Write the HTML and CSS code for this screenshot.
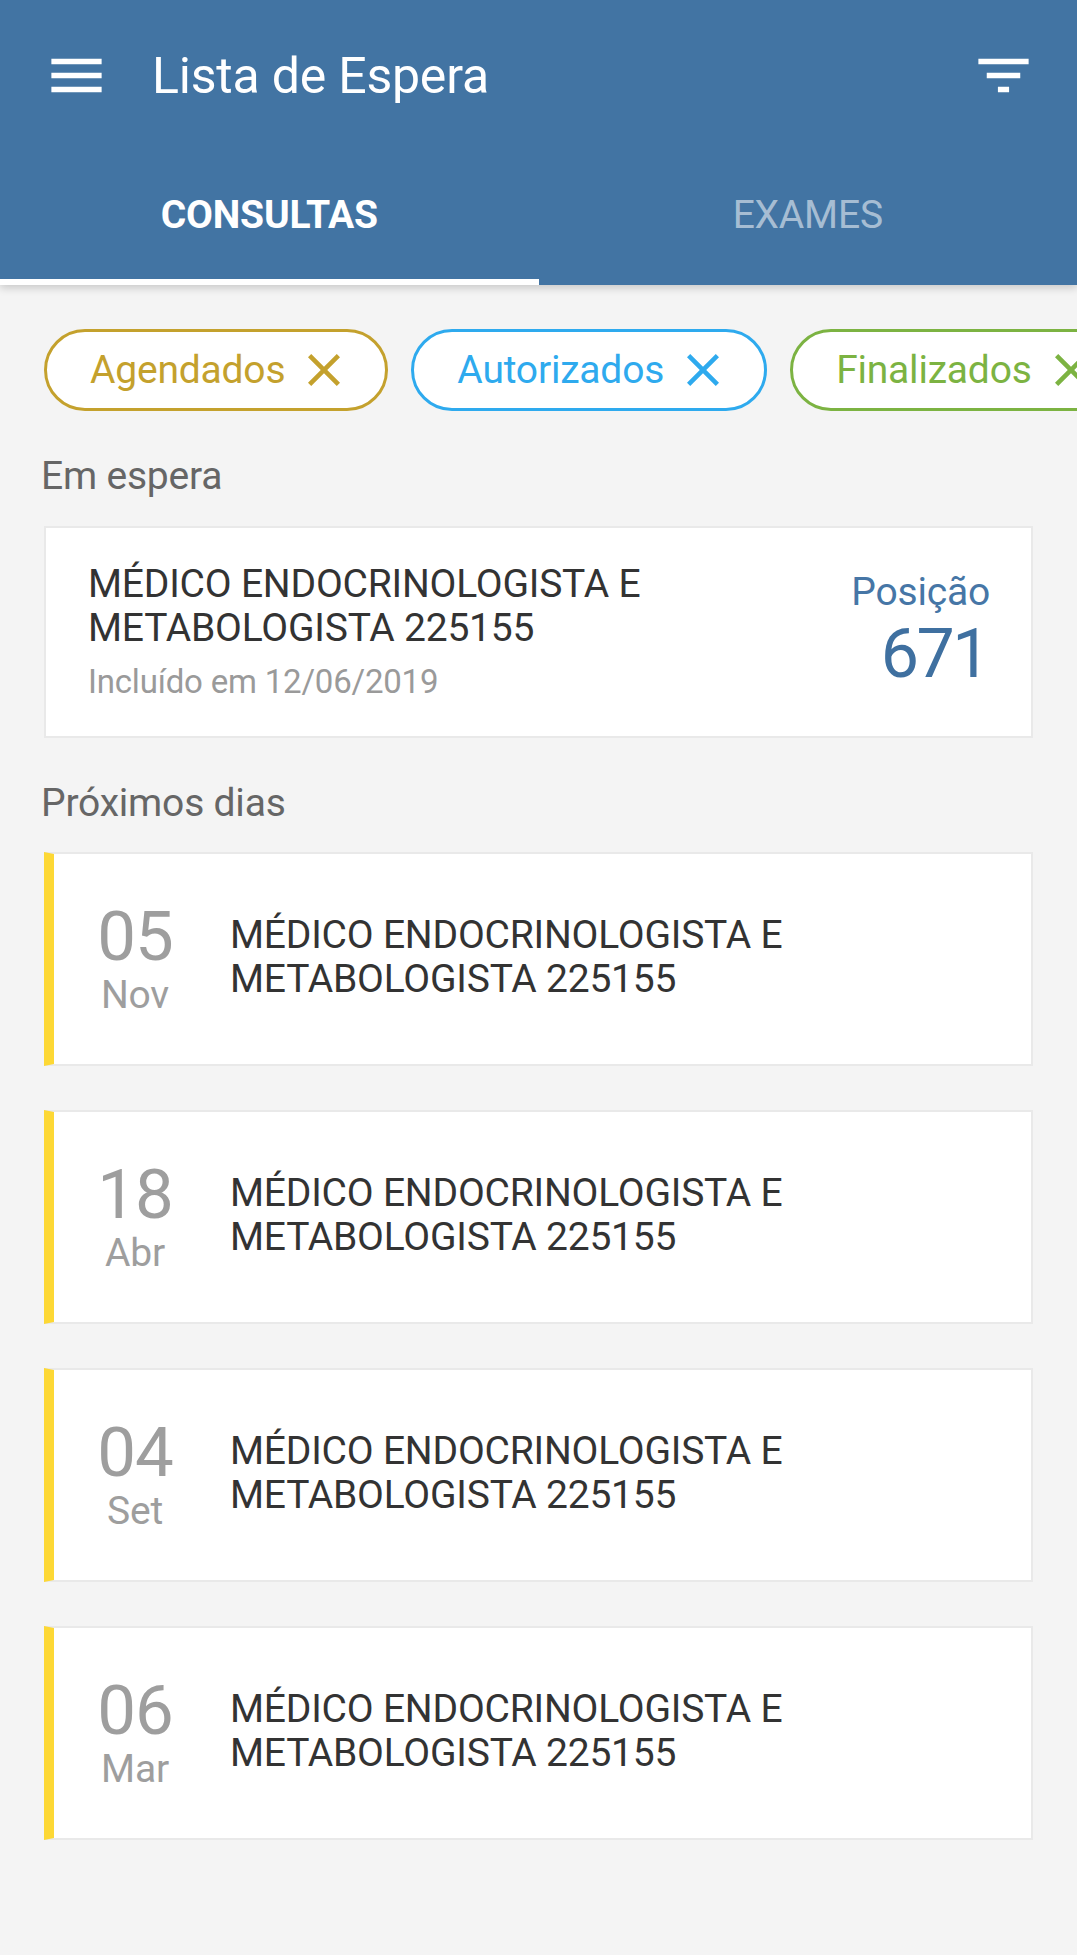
FILE: index.html
```html
<!DOCTYPE html>
<html lang="pt">
<head>
<meta charset="utf-8">
<title>Lista de Espera</title>
<link rel="stylesheet" href="styles.css">
</head>
<body>
<header class="appbar">
  <div class="toolbar">
    <svg class="icon" viewBox="0 0 24 24" aria-hidden="true"><path d="M3 18h18v-2H3v2zm0-5h18v-2H3v2zm0-7v2h18V6H3z"/></svg>
    <h1 class="title">Lista de Espera</h1>
    <svg class="icon icon-right" viewBox="0 0 24 24" aria-hidden="true"><path d="M10 18h4v-2h-4v2zM3 6v2h18V6H3zm3 7h12v-2H6v2z"/></svg>
  </div>
  <nav class="tabs">
    <div class="tab active">CONSULTAS</div>
    <div class="tab">EXAMES</div>
  </nav>
</header>

<main class="content">
  <div class="chips">
    <div class="chip chip-gold">Agendados<svg class="x" viewBox="5 5 14 14"><path d="M19 6.41L17.59 5 12 10.59 6.41 5 5 6.41 10.59 12 5 17.59 6.41 19 12 13.41 17.59 19 19 17.59 13.41 12z"/></svg></div>
    <div class="chip chip-blue">Autorizados<svg class="x" viewBox="5 5 14 14"><path d="M19 6.41L17.59 5 12 10.59 6.41 5 5 6.41 10.59 12 5 17.59 6.41 19 12 13.41 17.59 19 19 17.59 13.41 12z"/></svg></div>
    <div class="chip chip-green">Finalizados<svg class="x" viewBox="5 5 14 14"><path d="M19 6.41L17.59 5 12 10.59 6.41 5 5 6.41 10.59 12 5 17.59 6.41 19 12 13.41 17.59 19 19 17.59 13.41 12z"/></svg></div>
  </div>

  <h2 class="section">Em espera</h2>
  <div class="card wait">
    <div class="wait-info">
      <div class="name">MÉDICO ENDOCRINOLOGISTA E<br>METABOLOGISTA 225155</div>
      <div class="included">Incluído em 12/06/2019</div>
    </div>
    <div class="position">
      <div class="pos-label">Posição</div>
      <div class="pos-num">671</div>
    </div>
  </div>

  <h2 class="section section-next">Próximos dias</h2>
  <div class="card item">
    <div class="date"><div class="day">05</div><div class="month">Nov</div></div>
    <div class="name">MÉDICO ENDOCRINOLOGISTA E<br>METABOLOGISTA 225155</div>
  </div>
  <div class="card item">
    <div class="date"><div class="day">18</div><div class="month">Abr</div></div>
    <div class="name">MÉDICO ENDOCRINOLOGISTA E<br>METABOLOGISTA 225155</div>
  </div>
  <div class="card item">
    <div class="date"><div class="day">04</div><div class="month">Set</div></div>
    <div class="name">MÉDICO ENDOCRINOLOGISTA E<br>METABOLOGISTA 225155</div>
  </div>
  <div class="card item">
    <div class="date"><div class="day">06</div><div class="month">Mar</div></div>
    <div class="name">MÉDICO ENDOCRINOLOGISTA E<br>METABOLOGISTA 225155</div>
  </div>
</main>
</body>
</html>
```

FILE: styles.css
```css
* { box-sizing: border-box; }

html, body {
  margin: 0;
  padding: 0;
}

body {
  background: #f4f4f4;
  font-family: Roboto, "Noto Sans", "Liberation Sans", sans-serif;
  letter-spacing: -0.2px;
  width: 1077px;
  min-height: 1955px;
  overflow: hidden;
}

.appbar {
  background: #4274a3;
  color: #fff;
  box-shadow: 0 3px 8px rgba(0, 0, 0, 0.18);
  position: relative;
  z-index: 1;
}

.toolbar {
  height: 151px;
  display: flex;
  align-items: center;
  padding: 0 40px 0 43px;
}

.icon {
  width: 67px;
  height: 67px;
  fill: #fff;
  flex: none;
}

.icon-right { margin-left: auto; }

.title {
  margin: 0 0 0 42px;
  font-size: 50px;
  font-weight: 400;
  line-height: 60px;
}

.tabs {
  display: flex;
  height: 134px;
}

.tab {
  flex: 1;
  display: flex;
  align-items: center;
  justify-content: center;
  padding-bottom: 6px;
  font-size: 39px;
  font-weight: 400;
  color: rgba(255, 255, 255, 0.55);
}

.tab.active {
  font-weight: 700;
  color: #fff;
  box-shadow: inset 0 -6px 0 #fff;
}

.content {
  padding: 44px 44px 0 44px;
}

.chips {
  display: flex;
  gap: 23px;
  white-space: nowrap;
  margin-right: -44px;
  overflow: hidden;
}

.chip {
  flex: none;
  height: 82px;
  border: 3px solid currentColor;
  border-radius: 41px;
  background: #fff;
  display: flex;
  align-items: center;
  gap: 23px;
  padding: 0 45px 0 43px;
  font-size: 39px;
  line-height: 46px;
}

.chip .x {
  width: 32px;
  height: 32px;
  fill: currentColor;
  flex: none;
}

.chip-gold { color: #c4a12d; }
.chip-blue { color: #2eaaee; }
.chip-green { color: #7cb342; }

.section {
  margin: 42px 0 27px -3px;
  font-size: 39px;
  font-weight: 400;
  line-height: 46px;
  color: #666;
}

.section-next { margin-bottom: 26px; }

.card {
  background: #fff;
  border: 2px solid #e9e9e9;
}

.wait {
  display: flex;
  align-items: center;
  justify-content: space-between;
  padding: 34px 41px 34px 42px;
}

.name {
  font-size: 39px;
  line-height: 44px;
  color: #333;
}

.item .name {
  padding-bottom: 4px;
}

.included {
  margin-top: 12px;
  font-size: 33px;
  line-height: 40px;
  color: #9a9a9a;
}

.position {
  text-align: right;
  color: #4676a6;
}

.pos-label {
  font-size: 39px;
  line-height: 44px;
}

.pos-num {
  font-size: 68px;
  line-height: 80px;
  letter-spacing: -2.5px;
  padding-right: 2px;
  color: #3f70a0;
}

.item {
  display: flex;
  align-items: center;
  border-left: 10px solid #fdd835;
  padding: 47px 0;
  margin-bottom: 44px;
}

.date {
  width: 90px;
  margin-left: 36px;
  margin-right: 50px;
  text-align: center;
  color: #9e9e9e;
  flex: none;
}

.day {
  font-size: 69px;
  line-height: 72px;
  letter-spacing: -1px;
}

.month {
  font-size: 39px;
  line-height: 44px;
}
```
